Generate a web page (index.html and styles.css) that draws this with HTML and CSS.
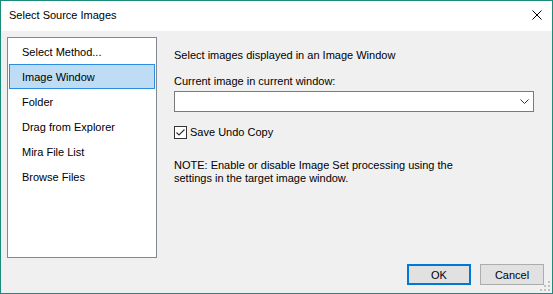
FILE: index.html
```html
<!DOCTYPE html>
<html lang="en">
<head>
    <meta charset="UTF-8">
    <title>Select Source Images</title>
    <link rel="stylesheet" href="styles.css">
</head>
<body>
    <div class="dialog">
        <div class="title-bar">
            <span class="title">Select Source Images</span>
            <svg class="close-icon" width="10" height="10" viewBox="0 0 10 10">
                <path d="M0.5 0.5 L9.5 9.5 M9.5 0.5 L0.5 9.5" stroke="#000" stroke-width="1" fill="none"/>
            </svg>
        </div>

        <div class="dialog-body">
            <div class="main">
                <ul class="method-list">
                    <li class="method-item">Select Method...</li>
                    <li class="method-item selected">Image Window</li>
                    <li class="method-item">Folder</li>
                    <li class="method-item">Drag from Explorer</li>
                    <li class="method-item">Mira File List</li>
                    <li class="method-item">Browse Files</li>
                </ul>

                <div class="panel">
                    <div class="panel-heading">Select images displayed in an Image Window</div>
                    <label class="field-label">Current image in current window:</label>
                    <div class="combo">
                        <svg class="combo-arrow" width="9" height="5" viewBox="0 0 9 5">
                            <path d="M0.5 0.5 L4.5 4.5 L8.5 0.5" stroke="#333" stroke-width="1" fill="none"/>
                        </svg>
                    </div>
                    <div class="check-row">
                        <span class="checkbox">
                            <svg width="11" height="11" viewBox="0 0 11 11">
                                <path d="M1.5 5.5 L4 8 L9.5 2.5" stroke="#333" stroke-width="1.2" fill="none"/>
                            </svg>
                        </span>
                        <span>Save Undo Copy</span>
                    </div>
                    <p class="note">NOTE: Enable or disable Image Set processing using the settings in the target image window.</p>
                </div>
            </div>

            <div class="footer">
                <button class="btn btn-default">OK</button>
                <button class="btn">Cancel</button>
                <svg class="size-grip" width="11" height="11" viewBox="0 0 11 11">
                    <rect x="8" y="0" width="2" height="2" fill="#c2c2c2"/>
                    <rect x="4" y="4" width="2" height="2" fill="#c2c2c2"/>
                    <rect x="8" y="4" width="2" height="2" fill="#c2c2c2"/>
                    <rect x="0" y="8" width="2" height="2" fill="#c2c2c2"/>
                    <rect x="4" y="8" width="2" height="2" fill="#c2c2c2"/>
                    <rect x="8" y="8" width="2" height="2" fill="#c2c2c2"/>
                </svg>
            </div>
        </div>
    </div>
</body>
</html>
```

FILE: styles.css
```css
body {
    margin: 0;
    padding: 0;
    font-family: "Liberation Sans", Arial, sans-serif;
    font-size: 11px;
    color: #000;
    background: #f0f0f0;
}

.dialog {
    width: 553px;
    height: 294px;
    box-sizing: border-box;
    border: 1px solid #1b8c79;
    display: flex;
    flex-direction: column;
    background: #f0f0f0;
}

.title-bar {
    height: 30px;
    background: #fff;
    display: flex;
    align-items: center;
    justify-content: space-between;
    padding: 0 10px 0 8px;
    flex-shrink: 0;
}

.title {
    font-size: 11px;
    margin-top: -2px;
}

.close-icon {
    margin-top: -2px;
}

.dialog-body {
    flex: 1;
    display: flex;
    flex-direction: column;
    padding: 6px 7px 8px 6px;
}

.main {
    display: flex;
    gap: 17px;
}

.method-list {
    list-style: none;
    margin: 0;
    padding: 1px 1px;
    width: 150px;
    height: 221px;
    box-sizing: border-box;
    background: #fff;
    border: 1px solid #828790;
}

.method-item {
    height: 25px;
    line-height: 24px;
    padding-left: 12px;
    box-sizing: border-box;
    border: 1px solid transparent;
}

.method-item.selected {
    background: #bfdcf5;
    border-color: #2c8ce0;
}

.panel {
    flex: 1;
    display: flex;
    flex-direction: column;
    padding-top: 9px;
}

.panel-heading {
    line-height: 18px;
}

.field-label {
    margin-top: 8px;
    line-height: 18px;
}

.combo {
    margin-top: 1px;
    height: 21px;
    width: 360px;
    box-sizing: border-box;
    background: #fff;
    border: 1px solid #7a7a7a;
    display: flex;
    align-items: center;
    justify-content: flex-end;
    padding-right: 4px;
}

.check-row {
    margin-top: 12px;
    display: flex;
    align-items: center;
    gap: 3px;
    line-height: 16px;
}

.checkbox {
    width: 13px;
    height: 13px;
    box-sizing: border-box;
    border: 1px solid #333;
    background: #fff;
    display: flex;
    align-items: center;
    justify-content: center;
}

.note {
    margin: 19px 0 0;
    width: 290px;
    line-height: 13px;
}

.footer {
    margin-top: auto;
    display: flex;
    justify-content: flex-end;
    align-items: flex-end;
    gap: 9px;
    position: relative;
}

.btn {
    width: 64px;
    height: 21px;
    font-family: inherit;
    font-size: 11px;
    color: #000;
    background: #e1e1e1;
    border: 1px solid #adadad;
    padding: 0;
}

.btn:last-of-type {
    margin-right: 1px;
}

.btn-default {
    border: 2px solid #0078d7;
}

.size-grip {
    position: absolute;
    right: -6px;
    bottom: -7px;
}
```
